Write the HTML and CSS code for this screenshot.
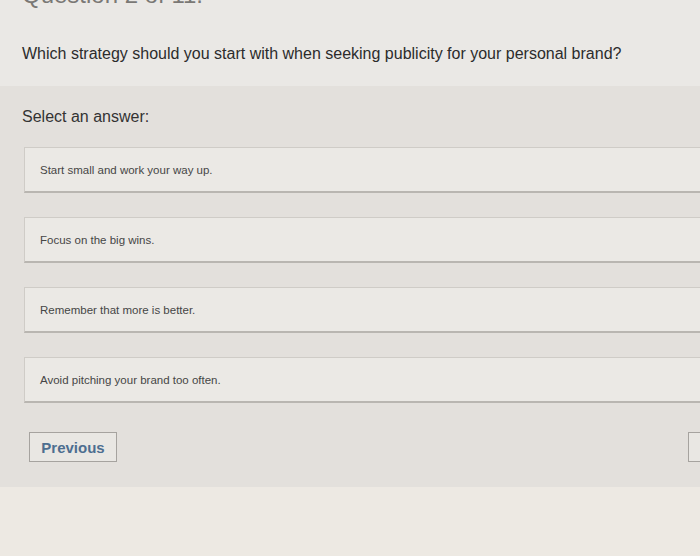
FILE: index.html
```html
<!DOCTYPE html>
<html>
<head>
<meta charset="utf-8">
<link rel="stylesheet" href="styles.css">
</head>
<body>
<div class="page">
  <header class="top">
    <div class="qnum">Question 2 of 11.</div>
    <p class="question">Which strategy should you start with when seeking publicity for your personal brand?</p>
  </header>
  <section class="band">
    <p class="label">Select an answer:</p>
    <div class="options">
      <div class="option">Start small and work your way up.</div>
      <div class="option">Focus on the big wins.</div>
      <div class="option">Remember that more is better.</div>
      <div class="option">Avoid pitching your brand too often.</div>
    </div>
    <div class="nav">
      <button class="btn prev">Previous</button>
      <button class="btn next" aria-label="Next"></button>
    </div>
  </section>
  <footer class="bottom"></footer>
</div>
</body>
</html>
```
FILE: styles.css
```css
html, body {
  margin: 0;
  padding: 0;
  overflow: hidden;
}
body {
  width: 700px;
  height: 556px;
  background: #ebe8e4;
  font-family: "Liberation Sans", Arial, sans-serif;
  color: #2f2f2f;
}
.page {
  display: flex;
  flex-direction: column;
  height: 556px;
}
.top {
  height: 86px;
  padding: 0 22px;
  background: #eae8e5;
  overflow: hidden;
}
.qnum {
  margin-top: -19px;
  height: 28px;
  line-height: 28px;
  font-size: 24px;
  color: #7a7875;
}
.question {
  margin: 35px 0 0;
  font-size: 16px;
  line-height: 20px;
  color: #2c2c2c;
}
.band {
  height: 401px;
  box-sizing: border-box;
  padding: 21px 0 0 22px;
  background: #e3e0dc;
  display: flex;
  flex-direction: column;
}
.label {
  margin: 0;
  font-size: 16px;
  line-height: 20px;
  color: #333;
}
.options {
  margin: 20px -30px 0 2px;
  display: flex;
  flex-direction: column;
  gap: 24px;
}
.option {
  height: 46px;
  box-sizing: border-box;
  display: flex;
  align-items: center;
  padding-left: 15px;
  background: #ebe9e5;
  border: 1px solid #cfccc7;
  border-bottom: 2px solid #b9b6b1;
  font-size: 11.5px;
  color: #464646;
}
.nav {
  margin-top: 29px;
  padding-left: 7px;
  display: flex;
  justify-content: space-between;
  margin-right: -80px;
}
.btn {
  height: 30px;
  box-sizing: border-box;
  background: #e9e7e3;
  border: 1px solid #a6a39f;
  font-family: "Liberation Sans", Arial, sans-serif;
  font-weight: bold;
  font-size: 15px;
  color: #4d6e90;
  padding: 0 11px;
}
.prev {
  width: 88px;
}
.next {
  width: 92px;
}
.bottom {
  flex: 1;
  background: #ede9e3;
}
```
